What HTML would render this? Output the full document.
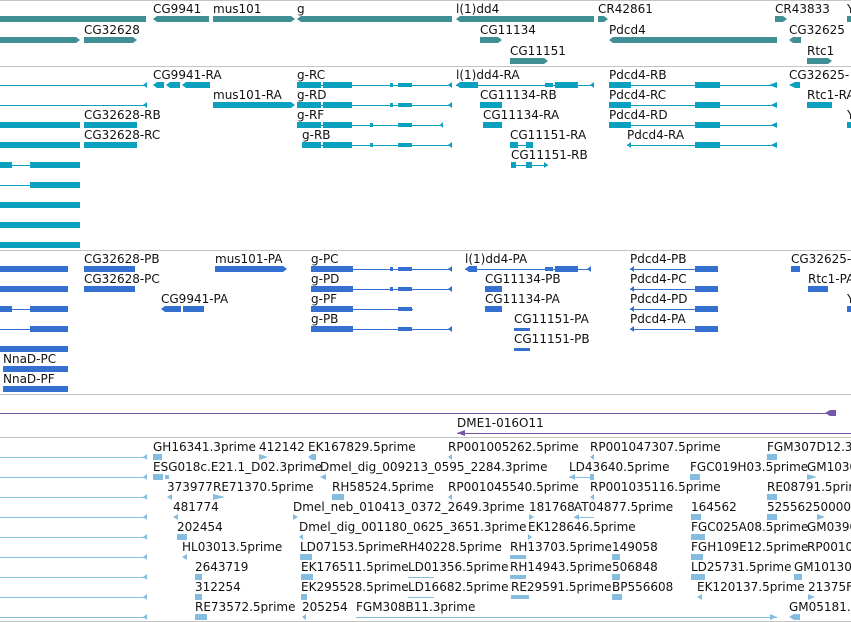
<!DOCTYPE html>
<html><head><meta charset="utf-8"><style>
html,body{margin:0;padding:0;background:#fff;width:851px;height:622px;overflow:hidden}
svg{display:block}
text{font-family:"DejaVu Sans","Liberation Sans",sans-serif;font-size:12px;fill:#111}
</style></head><body>
<svg width="851" height="622" viewBox="0 0 851 622">
<!-- separators -->
<rect x="0" y="0" width="851" height="1" fill="#c4c4c4"/>
<rect x="0" y="66" width="851" height="1" fill="#c4c4c4"/>
<rect x="0" y="250" width="851" height="1" fill="#c4c4c4"/>
<rect x="0" y="394" width="851" height="1" fill="#c4c4c4"/>
<rect x="0" y="437" width="851" height="1" fill="#c4c4c4"/>
<rect x="0" y="621" width="851" height="1" fill="#c4c4c4"/>

<!-- GENE TRACK -->
<g fill="#3f8f94">
<rect x="0" y="16" width="146" height="6"/>
<polygon points="153,19 157,16 209,16 209,22 157,22"/>
<polygon points="213,16 291,16 295,19 291,22 213,22"/>
<polygon points="297,19 301,16 452,16 452,22 301,22"/>
<polygon points="456,19 460,16 594,16 594,22 460,22"/>
<polygon points="598,16 604,16 608,19 604,22 598,22"/>
<polygon points="775,16 783,16 787,19 783,22 775,22"/>
<rect x="847" y="16" width="4" height="6"/>
<polygon points="0,37 76,37 80,40 76,43 0,43"/>
<polygon points="84,37 133,37 137,40 133,43 84,43"/>
<polygon points="480,37 498,37 502,40 498,43 480,43"/>
<polygon points="609,40 613,37 777,37 777,43 613,43"/>
<polygon points="789,40 793,37 801,37 801,43 793,43"/>
<polygon points="510,58 544,58 548,61 544,64 510,64"/>
<polygon points="807,58 828,58 832,61 828,64 807,64"/>
</g>
<text x="153" y="13">CG9941</text>
<text x="213" y="13">mus101</text>
<text x="297" y="13">g</text>
<text x="456" y="13">l(1)dd4</text>
<text x="598" y="13">CR42861</text>
<text x="775" y="13">CR43833</text>
<text x="847" y="13">Y</text>
<text x="84" y="34">CG32628</text>
<text x="480" y="34">CG11134</text>
<text x="609" y="34">Pdcd4</text>
<text x="789" y="34">CG32625</text>
<text x="510" y="55">CG11151</text>
<text x="807" y="55">Rtc1</text>

<!-- TRANSCRIPT TRACK -->
<g fill="#0aa0c0">
<!-- rows 85,105 left lines -->
<rect x="0" y="85" width="147" height="1"/><polygon points="143,85 147,82 147,88"/>
<rect x="0" y="105" width="147" height="1"/><polygon points="143,105 147,102 147,108"/>
<!-- CG9941-RA -->
<polygon points="153,85 157,82 164,82 164,88 157,88"/><polygon points="166,85 170,82 180,82 180,88 170,88"/><polygon points="182,85 186,82 210,82 210,88 186,88"/>
<!-- mus101-RA -->
<polygon points="213,102 291,102 295,105 291,108 213,108"/>
<!-- g transcripts rows 85,105,125 -->
<rect x="297" y="82" width="24" height="6"/><rect x="323" y="82" width="29" height="6"/><rect x="297" y="85" width="155" height="1"/><rect x="390" y="83" width="3" height="4"/><rect x="398" y="83" width="14" height="4"/>
<rect x="297" y="102" width="24" height="6"/><rect x="323" y="102" width="29" height="6"/><rect x="297" y="105" width="155" height="1"/><rect x="390" y="103" width="3" height="4"/><rect x="398" y="103" width="14" height="4"/>
<rect x="297" y="122" width="24" height="6"/><rect x="323" y="122" width="29" height="6"/><rect x="297" y="125" width="146" height="1"/><rect x="370" y="123" width="3" height="4"/><rect x="398" y="123" width="14" height="4"/>
<rect x="302" y="142" width="19" height="6"/><rect x="323" y="142" width="29" height="6"/><rect x="302" y="145" width="150" height="1"/><rect x="370" y="143" width="3" height="4"/><rect x="398" y="143" width="14" height="4"/>
<!-- g continuation lines from left of l(1)dd4 -->
<rect x="425" y="85" width="27" height="1"/><polygon points="448,85 452,82 452,88"/>
<polygon points="448,105 452,102 452,108"/>
<polygon points="440,125 443,122 443,128"/>
<polygon points="448,145 452,142 452,148"/>
<!-- l(1)dd4-RA -->
<polygon points="456,85 460,82 478,82 478,88 460,88"/><rect x="456" y="85" width="138" height="1"/><rect x="545" y="83" width="8" height="4"/><rect x="555" y="82" width="23" height="6"/><polygon points="590,85 594,82 594,88"/>
<!-- CG11134 -->
<rect x="480" y="102" width="22" height="6"/>
<rect x="483" y="122" width="19" height="6"/>
<!-- CG11151 -->
<rect x="510" y="142" width="8" height="6"/><rect x="510" y="145" width="23" height="1"/><rect x="526" y="142" width="7" height="6"/>
<rect x="511" y="162" width="5" height="6"/><rect x="511" y="165" width="37" height="1"/><rect x="526" y="162" width="6" height="6"/><polygon points="544,162 548,165 544,168"/>
<!-- Pdcd4 transcripts -->
<rect x="609" y="82" width="22" height="6"/><rect x="609" y="85" width="168" height="1"/><rect x="695" y="82" width="25" height="6"/><polygon points="769,85 777,82 777,88"/>
<rect x="609" y="102" width="22" height="6"/><rect x="609" y="105" width="168" height="1"/><rect x="695" y="102" width="25" height="6"/><polygon points="771,105 777,102 777,108"/>
<rect x="609" y="122" width="22" height="6"/><rect x="609" y="125" width="168" height="1"/><rect x="695" y="122" width="25" height="6"/><polygon points="771,125 777,122 777,128"/>
<polygon points="627,145 631,142 631,148"/><rect x="627" y="145" width="150" height="1"/><rect x="695" y="142" width="25" height="6"/><polygon points="771,145 777,142 777,148"/>
<polygon points="789,85 795,82 800,82 800,88 795,88"/>
<rect x="807" y="102" width="25" height="6"/>
<rect x="847" y="122" width="4" height="6"/>
<!-- CG32628 transcripts -->
<rect x="84" y="122" width="53" height="6"/>
<rect x="84" y="142" width="53" height="6"/>
<!-- left NnaD-like rows -->
<rect x="0" y="122" width="80" height="6"/><rect x="0" y="142" width="80" height="6"/>
<rect x="0" y="162" width="12" height="6"/><rect x="0" y="165" width="80" height="1"/><rect x="30" y="162" width="50" height="6"/>
<rect x="0" y="185" width="80" height="1"/><rect x="30" y="182" width="50" height="6"/>
<rect x="0" y="202" width="80" height="6"/><rect x="0" y="222" width="80" height="6"/><rect x="0" y="242" width="80" height="6"/>
</g>
<text x="153" y="79">CG9941-RA</text>
<text x="297" y="79">g-RC</text>
<text x="456" y="79">l(1)dd4-RA</text>
<text x="609" y="79">Pdcd4-RB</text>
<text x="789" y="79">CG32625-</text>
<text x="213" y="99">mus101-RA</text>
<text x="297" y="99">g-RD</text>
<text x="480" y="99">CG11134-RB</text>
<text x="609" y="99">Pdcd4-RC</text>
<text x="807" y="99">Rtc1-RA</text>
<text x="84" y="119">CG32628-RB</text>
<text x="297" y="119">g-RF</text>
<text x="483" y="119">CG11134-RA</text>
<text x="609" y="119">Pdcd4-RD</text>
<text x="847" y="119">Y</text>
<text x="84" y="139">CG32628-RC</text>
<text x="302" y="139">g-RB</text>
<text x="510" y="139">CG11151-RA</text>
<text x="627" y="139">Pdcd4-RA</text>
<text x="511" y="159">CG11151-RB</text>

<!-- PROTEIN TRACK -->
<g fill="#3370cf">
<rect x="0" y="266" width="68" height="6"/><rect x="0" y="286" width="68" height="6"/>
<rect x="0" y="306" width="12" height="6"/><rect x="0" y="309" width="68" height="1"/><rect x="30" y="306" width="38" height="6"/>
<rect x="0" y="329" width="68" height="1"/><rect x="30" y="326" width="38" height="6"/>
<rect x="0" y="346" width="68" height="6"/>
<rect x="3" y="366" width="65" height="6"/><rect x="3" y="386" width="65" height="6"/>
<rect x="84" y="266" width="51" height="6"/><rect x="84" y="286" width="51" height="6"/>
<polygon points="215,266 283,266 287,269 283,272 215,272"/>
<polygon points="161,309 165,306 181,306 181,312 165,312"/><rect x="183" y="306" width="21" height="6"/>
<rect x="311" y="266" width="42" height="6"/><rect x="311" y="269" width="141" height="1"/><rect x="390" y="267" width="3" height="4"/><rect x="398" y="267" width="14" height="4"/>
<rect x="311" y="286" width="42" height="6"/><rect x="311" y="289" width="141" height="1"/><rect x="390" y="287" width="3" height="4"/><rect x="398" y="287" width="14" height="4"/>
<rect x="311" y="306" width="42" height="6"/><rect x="311" y="309" width="102" height="1"/><rect x="398" y="307" width="14" height="4"/>
<rect x="311" y="326" width="42" height="6"/><rect x="311" y="329" width="141" height="1"/><rect x="398" y="327" width="14" height="4"/>
<rect x="425" y="269" width="27" height="1"/><polygon points="448,269 452,266 452,272"/>
<rect x="425" y="289" width="27" height="1"/><polygon points="448,289 452,286 452,292"/>
<rect x="425" y="329" width="27" height="1"/><polygon points="448,329 452,326 452,332"/>
<polygon points="465,269 469,266 477,266 477,272 469,272"/><rect x="465" y="269" width="126" height="1"/><rect x="545" y="267" width="8" height="4"/><rect x="555" y="266" width="23" height="6"/><polygon points="587,269 591,266 591,272"/>
<rect x="485" y="286" width="17" height="6"/><rect x="485" y="306" width="17" height="6"/>
<rect x="514" y="328" width="16" height="3"/><rect x="514" y="348" width="16" height="3"/>
<polygon points="630,269 634,266 634,272"/><rect x="630" y="269" width="88" height="1"/><rect x="695" y="266" width="23" height="6"/>
<polygon points="630,289 634,286 634,292"/><rect x="630" y="289" width="88" height="1"/><rect x="695" y="286" width="23" height="6"/>
<polygon points="630,309 634,306 634,312"/><rect x="630" y="309" width="88" height="1"/><rect x="695" y="306" width="23" height="6"/>
<polygon points="630,329 634,326 634,332"/><rect x="630" y="329" width="88" height="1"/><rect x="695" y="326" width="23" height="6"/>
<rect x="791" y="266" width="9" height="6"/>
<rect x="808" y="286" width="20" height="6"/>
<rect x="847" y="306" width="4" height="6"/>
</g>
<text x="84" y="263">CG32628-PB</text>
<text x="215" y="263">mus101-PA</text>
<text x="311" y="263">g-PC</text>
<text x="465" y="263">l(1)dd4-PA</text>
<text x="630" y="263">Pdcd4-PB</text>
<text x="791" y="263">CG32625-</text>
<text x="84" y="283">CG32628-PC</text>
<text x="311" y="283">g-PD</text>
<text x="485" y="283">CG11134-PB</text>
<text x="630" y="283">Pdcd4-PC</text>
<text x="808" y="283">Rtc1-PA</text>
<text x="161" y="303">CG9941-PA</text>
<text x="311" y="303">g-PF</text>
<text x="485" y="303">CG11134-PA</text>
<text x="630" y="303">Pdcd4-PD</text>
<text x="847" y="303">Y</text>
<text x="311" y="323">g-PB</text>
<text x="514" y="323">CG11151-PA</text>
<text x="630" y="323">Pdcd4-PA</text>
<text x="514" y="343">CG11151-PB</text>
<text x="3" y="363">NnaD-PC</text>
<text x="3" y="383">NnaD-PF</text>

<!-- PURPLE TRACK -->
<g fill="#7457a8">
<rect x="0" y="413" width="830" height="1"/><polygon points="825,413 830,410 836,410 836,416 830,416"/>
<rect x="457" y="433" width="394" height="1"/><polygon points="457,433 465,430 465,436"/>
</g>
<text x="457" y="427">DME1-016O11</text>

<!-- EST TRACK -->
<g fill="#84bde0">
<rect x="0" y="457" width="147" height="1"/><polygon points="143,457 147,454 147,460"/>
<rect x="0" y="477" width="147" height="1"/><polygon points="143,477 147,474 147,480"/>
<rect x="0" y="497" width="147" height="1"/><polygon points="143,497 147,494 147,500"/>
<rect x="0" y="517" width="147" height="1"/><polygon points="143,517 147,514 147,520"/>
<rect x="0" y="537" width="147" height="1"/><polygon points="143,537 147,534 147,540"/>
<rect x="0" y="557" width="147" height="1"/><polygon points="143,557 147,554 147,560"/>
<rect x="0" y="577" width="147" height="1"/><polygon points="143,577 147,574 147,580"/>
<rect x="0" y="597" width="147" height="1"/><polygon points="143,597 147,594 147,600"/>
<rect x="0" y="617" width="147" height="1"/><polygon points="143,617 147,614 147,620"/>
<rect x="153" y="454" width="9" height="6"/><polygon points="259,454 268,457 259,460"/><polygon points="308,457 312,454 316,454 316,460 312,460"/>
<polygon points="448,457 452,454 452,460"/><polygon points="590,457 594,454 594,460"/><rect x="767" y="454" width="10" height="6"/>
<rect x="153" y="474" width="10" height="6"/><rect x="165" y="475" width="4" height="4"/><polygon points="320,477 326,474 326,480"/><rect x="569" y="477" width="24" height="1"/><polygon points="569,477 575,474 575,480"/><rect x="590" y="474" width="4" height="6"/><rect x="690" y="474" width="10" height="6"/><polygon points="807,474 817,477 807,480"/>
<polygon points="167,497 172,494 172,500"/><polygon points="213,494 225,497 213,500"/><rect x="332" y="494" width="12" height="6"/><polygon points="448,497 452,494 452,500"/><polygon points="590,497 594,494 594,500"/><rect x="767" y="494" width="10" height="6"/>
<polygon points="173,517 178,514 178,520"/><polygon points="293,514 298,517 293,520"/><polygon points="529,514 534,517 529,520"/><rect x="574" y="517" width="20" height="1"/><polygon points="574,517 579,514 579,520"/><rect x="691" y="514" width="10" height="6"/><rect x="767" y="514" width="10" height="6"/><polygon points="817,514 825,517 817,520"/>
<rect x="177" y="534" width="10" height="6"/><polygon points="299,537 303,534 303,540"/><polygon points="528,534 532,537 528,540"/><rect x="691" y="534" width="14" height="6"/>
<polygon points="182,557 187,554 187,560"/><rect x="300" y="554" width="12" height="6"/><rect x="510" y="555" width="16" height="4"/><rect x="612" y="554" width="8" height="6"/><rect x="691" y="554" width="12" height="6"/>
<rect x="195" y="574" width="7" height="6"/><rect x="301" y="574" width="12" height="6"/><rect x="408" y="577" width="26" height="1"/><rect x="510" y="575" width="16" height="4"/><rect x="612" y="574" width="8" height="6"/><rect x="691" y="574" width="14" height="6"/><rect x="794" y="574" width="8" height="6"/>
<rect x="195" y="594" width="7" height="6"/><rect x="301" y="594" width="6" height="6"/><rect x="408" y="597" width="26" height="1"/><rect x="511" y="595" width="18" height="4"/><rect x="612" y="594" width="10" height="6"/><polygon points="697,597 702,594 702,600"/><polygon points="808,594 815,597 808,600"/>
<rect x="195" y="614" width="12" height="6"/><polygon points="302,617 306,614 306,620"/><rect x="356" y="617" width="421" height="1"/><polygon points="770,614 777,617 770,620"/><polygon points="789,617 794,614 800,614 800,620 794,620"/>
</g>
<text x="153" y="451">GH16341.3prime</text><text x="259" y="451">412142</text><text x="308" y="451">EK167829.5prime</text><text x="448" y="451">RP001005262.5prime</text><text x="590" y="451">RP001047307.5prime</text><text x="767" y="451">FGM307D12.3prime</text>
<text x="153" y="471">ESG018c.E21.1_D02.3prime</text><text x="320" y="471">Dmel_dig_009213_0595_2284.3prime</text><text x="569" y="471">LD43640.5prime</text><text x="690" y="471">FGC019H03.5prime</text><text x="807" y="471">GM10301</text>
<text x="167" y="491">373977</text><text x="213" y="491">RE71370.5prime</text><text x="332" y="491">RH58524.5prime</text><text x="448" y="491">RP001045540.5prime</text><text x="590" y="491">RP001035116.5prime</text><text x="767" y="491">RE08791.5prime</text>
<text x="173" y="511">481774</text><text x="293" y="511">Dmel_neb_010413_0372_2649.3prime</text><text x="529" y="511">181768</text><text x="574" y="511">AT04877.5prime</text><text x="691" y="511">164562</text><text x="767" y="511">525562500000</text>
<text x="177" y="531">202454</text><text x="299" y="531">Dmel_dig_001180_0625_3651.3prime</text><text x="528" y="531">EK128646.5prime</text><text x="691" y="531">FGC025A08.5prime</text><text x="807" y="531">GM03901</text>
<text x="182" y="551">HL03013.5prime</text><text x="300" y="551">LD07153.5prime</text><text x="400" y="551">RH40228.5prime</text><text x="510" y="551">RH13703.5prime</text><text x="612" y="551">149058</text><text x="691" y="551">FGH109E12.5prime</text><text x="807" y="551">RP00101</text>
<text x="195" y="571">2643719</text><text x="301" y="571">EK176511.5prime</text><text x="408" y="571">LD01356.5prime</text><text x="510" y="571">RH14943.5prime</text><text x="612" y="571">506848</text><text x="691" y="571">LD25731.5prime</text><text x="794" y="571">GM10130</text>
<text x="195" y="591">312254</text><text x="301" y="591">EK295528.5prime</text><text x="408" y="591">LD16682.5prime</text><text x="511" y="591">RE29591.5prime</text><text x="612" y="591">BP556608</text><text x="697" y="591">EK120137.5prime</text><text x="808" y="591">21375F</text>
<text x="195" y="611">RE73572.5prime</text><text x="302" y="611">205254</text><text x="356" y="611">FGM308B11.3prime</text><text x="789" y="611">GM05181.</text>
</svg>
</body></html>
